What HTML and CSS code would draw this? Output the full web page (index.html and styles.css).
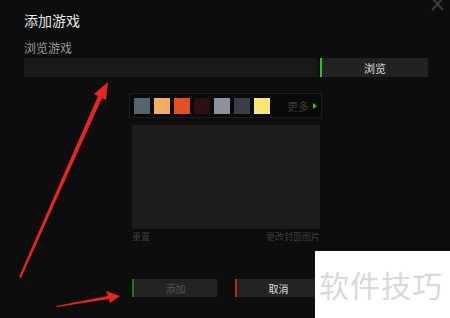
FILE: index.html
```html
<!DOCTYPE html>
<html lang="zh-CN">
  <head>
    <meta charset="UTF-8" />
    <meta name="viewport" content="width=device-width, initial-scale=1.0" />
    <title>添加游戏</title>
    <link rel="stylesheet" href="styles.css">
  </head>
  <body>
    <div class="dialog">
      <svg class="close" width="14" height="12" viewBox="0 0 14 12">
        <path d="M1 -2 L12 10 M12 -2 L1 10" stroke="#3c3c3c" stroke-width="2" />
      </svg>
      <h1 class="title">添加游戏</h1>
      <p class="label">浏览游戏</p>
      <div class="browse">
        <div class="path"></div>
        <button class="browse-btn">浏览</button>
      </div>

      <!-- cover picker -->
      <div class="picker">
        <div class="swatches">
          <span class="swatch" style="background:#546472"></span>
          <span class="swatch" style="background:#f4ad62"></span>
          <span class="swatch" style="background:#e44f25"></span>
          <span class="swatch" style="background:#2a1010"></span>
          <span class="swatch" style="background:#8a929e"></span>
          <span class="swatch" style="background:#3b3f45"></span>
          <span class="swatch" style="background:#fbe574"></span>
          <span class="more">更多 <i class="tri"></i></span>
        </div>
        <div class="preview"></div>
        <div class="links">
          <span>重置</span>
          <span>更改封面图片</span>
        </div>
      </div>

      <div class="actions">
        <button class="btn add">添加</button>
        <button class="btn cancel">取消</button>
      </div>
    </div>

    <!-- annotation arrows from the screenshot -->
    <svg class="arrows" width="450" height="318" viewBox="0 0 450 318">
      <polygon points="19,277 98,96 94,94 108,82 106,100 102,98 21,278" fill="#e8261c" />
      <polygon points="56,306 108,296 106,291 120,296 110,303 109,299 57,307" fill="#e8261c" />
    </svg>

    <div class="watermark">软件技巧</div>
  </body>
</html>
```

FILE: styles.css
```css
* {
  margin: 0;
  padding: 0;
  box-sizing: border-box;
  font-family: "Noto Sans CJK SC", "Noto Sans", sans-serif;
}

body {
  background: #0d0d0d;
  width: 450px;
  height: 318px;
  overflow: hidden;
  position: relative;
}
.dialog {
  padding: 10px 22px 0 24px;
  color: #ccc;
}
.close {
  position: absolute;
  top: 0;
  right: 5px;
}
.title {
  font-size: 14px;
  font-weight: 400;
  line-height: 20px;
  color: #e6e6e6;
}
.label {
  font-size: 12px;
  line-height: 16px;
  margin-top: 10px;
  color: #9a9a9a;
}
.browse {
  display: flex;
  height: 19px;
  margin-top: 2px;
}
.path {
  flex: 1;
  background: #191919;
  margin-right: 2px;
}
.browse-btn {
  width: 108px;
  border: 0;
  border-left: 2px solid #2cc12c;
  background: #222;
  color: #ddd;
  font-size: 11px;
}
.picker {
  width: 193px;
  margin: 16px 0 0 105px;
}
.swatches {
  display: flex;
  align-items: center;
  gap: 4px;
  height: 25px;
  padding: 0 4px;
  border: 1px solid #1d1d1d;
  background: #090909;
}
.swatch {
  width: 16px;
  height: 16px;
}
.more {
  margin-left: auto;
  font-size: 11px;
  color: #3a3a3a;
  display: flex;
  align-items: center;
  gap: 4px;
}
.tri {
  width: 0;
  height: 0;
  border-left: 4px solid #26c026;
  border-top: 3px solid transparent;
  border-bottom: 3px solid transparent;
}
.preview {
  width: 188px;
  height: 104px;
  margin: 7px 0 0 3px;
  background: #1c1c1c;
}
.links {
  display: flex;
  justify-content: space-between;
  margin-left: 3px;
  width: 188px;
  font-size: 9px;
  line-height: 16px;
  color: #3c3c3c;
}
.actions {
  display: flex;
  gap: 18px;
  margin: 34px 0 0 108px;
}
.btn {
  width: 85px;
  height: 18px;
  border: 0;
  background: #232323;
  font-size: 10px;
}
.add {
  border-left: 2px solid #1f7a1f;
  color: #555;
}
.cancel {
  border-left: 2px solid #c0241e;
  color: #ddd;
}
.arrows {
  position: absolute;
  top: 0;
  left: 0;
}
.watermark {
  position: absolute;
  left: 315px;
  top: 251px;
  width: 135px;
  height: 67px;
  background: #fff;
  color: #d9d9d9;
  font-size: 30px;
  line-height: 67px;
  padding-left: 4px;
  letter-spacing: 1px;
}
```
